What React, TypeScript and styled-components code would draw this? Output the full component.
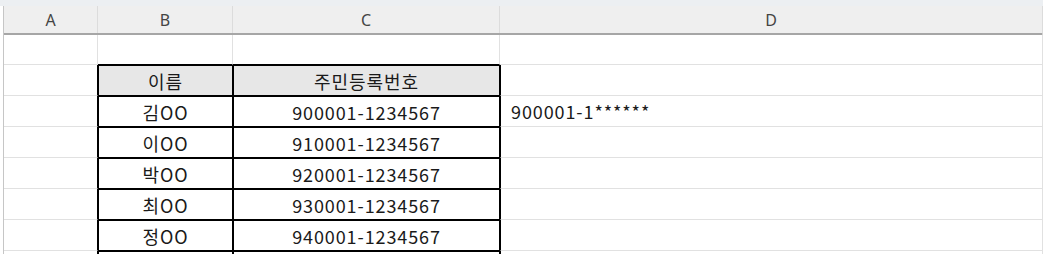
import { createGlobalStyle, styled } from "styled-components";

const GlobalStyle = createGlobalStyle`
  html, body {
    margin: 0;
    padding: 0;
    background: #ffffff;
  }
  body {
    font-family: "Noto Sans CJK KR", "Noto Sans", sans-serif;
    overflow: hidden;
  }
`;

const COLS = "94px 135px 267px 543px";
const GRID = "#e1e1e1";
const INK = "#000000";

const Sheet = styled.div`
  width: 1043px;
  height: 254px;
  display: flex;
  flex-direction: column;
  background: #ffffff;
  overflow: hidden;
`;

const TopStrip = styled.div`
  flex: none;
  height: 6px;
  background: #eceff2;
`;

const Body = styled.div`
  flex: 1;
  display: flex;
  flex-direction: column;
  margin-left: 3px;
  border-left: 1px solid #c6c6c6;
  border-right: 1px solid #d4d4d4;
`;

const HeaderRow = styled.div`
  flex: none;
  display: grid;
  grid-template-columns: ${COLS};
  height: 29px;
  background: #efefef;
  border-bottom: 2px solid #a6a6a6;
  box-sizing: border-box;
`;

const ColHead = styled.div`
  display: flex;
  align-items: center;
  justify-content: center;
  border-right: 1px solid #dcdcdc;
  color: #444444;
  font-family: "Noto Sans", sans-serif;
  font-size: 16px;
`;

const Row = styled.div<{ $h: number }>`
  flex: none;
  display: grid;
  grid-template-columns: ${COLS};
  height: ${p => p.$h}px;
`;

type CellProps = {
  $box?: boolean;
  $inkRight?: boolean;
  $inkLeft?: boolean;
  $inkBottom?: boolean;
  $head?: boolean;
  $align?: "left" | "center";
};

const Cell = styled.div<CellProps>`
  box-sizing: border-box;
  display: flex;
  align-items: center;
  justify-content: ${p => (p.$align === "left" ? "flex-start" : "center")};
  padding-left: ${p => (p.$align === "left" ? "10px" : "0")};
  border-right: 1px solid ${p => (p.$box || p.$inkRight ? INK : GRID)};
  border-bottom: 1px solid ${p => (p.$box || p.$inkBottom ? INK : GRID)};
  border-left: ${p => (p.$box || p.$inkLeft ? `1px solid ${INK}` : "none")};
  border-top: ${p => (p.$box ? `1px solid ${INK}` : "none")};
  background: ${p => (p.$head ? "#e7e7e7" : "transparent")};
  color: #1a1a1a;
  font-size: 18px;
  letter-spacing: 0.9px;
  white-space: nowrap;
  overflow: hidden;
`;

const people = [
  { name: "김OO", id: "900001-1234567", masked: "900001-1******" },
  { name: "이OO", id: "910001-1234567" },
  { name: "박OO", id: "920001-1234567" },
  { name: "최OO", id: "930001-1234567" },
  { name: "정OO", id: "940001-1234567" },
  { name: "", id: "" },
];

export default function App() {
  return (
    <>
      <GlobalStyle />
      <Sheet>
        <TopStrip />
        <Body>
          <HeaderRow>
            {["A", "B", "C", "D"].map(c => (
              <ColHead key={c}>{c}</ColHead>
            ))}
          </HeaderRow>

          <Row $h={30}>
            <Cell />
            <Cell $inkBottom />
            <Cell $inkBottom />
            <Cell />
          </Row>

          <Row $h={31}>
            <Cell $inkRight />
            <Cell $box $head>이름</Cell>
            <Cell $box $head>주민등록번호</Cell>
            <Cell $inkLeft />
          </Row>

          {people.map((p, i) => (
            <Row key={i} $h={31}>
              <Cell $inkRight />
              <Cell $box>{p.name}</Cell>
              <Cell $box>{p.id}</Cell>
              <Cell $inkLeft $align="left">
                {p.masked}
              </Cell>
            </Row>
          ))}
        </Body>
      </Sheet>
    </>
  );
}
